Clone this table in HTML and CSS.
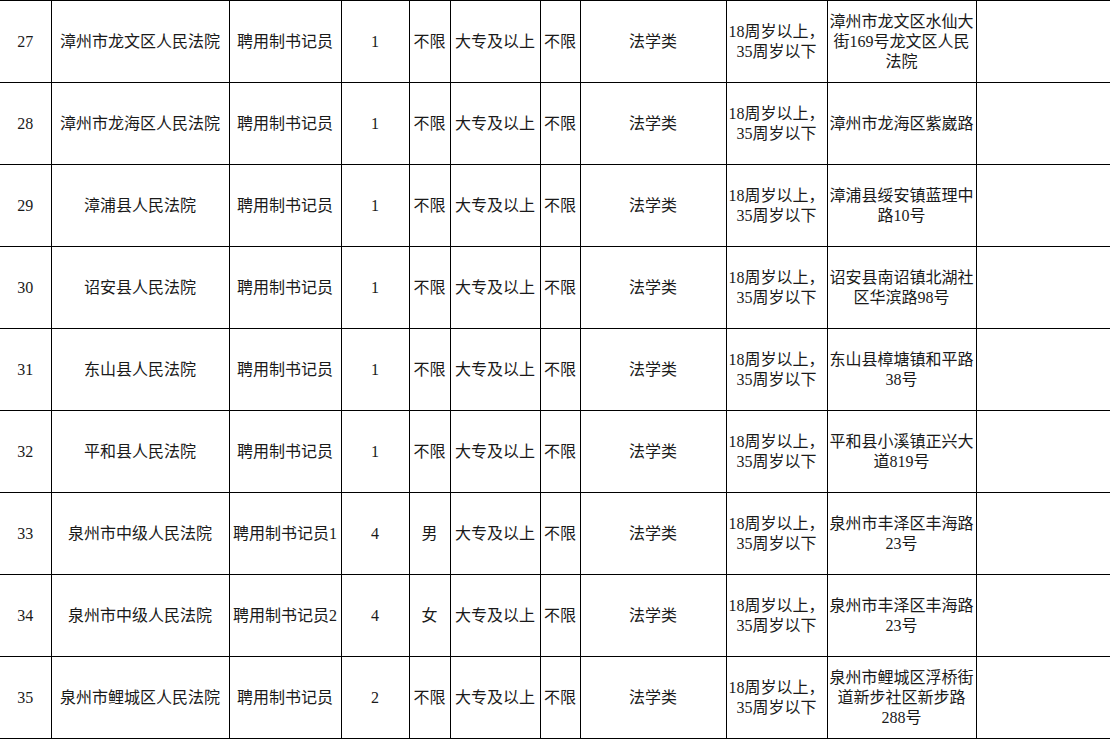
FILE: index.html
```html
<!DOCTYPE html>
<html lang="zh">
<head>
<meta charset="utf-8">
<title>招聘表</title>
<link rel="stylesheet" href="styles.css">
</head>
<body>
<table class="grid">
<colgroup>
<col class="c-no"><col class="c-unit"><col class="c-pos"><col class="c-num"><col class="c-sex"><col class="c-edu"><col class="c-deg"><col class="c-major"><col class="c-age"><col class="c-addr"><col class="c-note">
</colgroup>
<tbody>
<tr><td>27</td><td>漳州市龙文区人民法院</td><td>聘用制书记员</td><td>1</td><td>不限</td><td>大专及以上</td><td>不限</td><td>法学类</td><td>18周岁以上，<br>35周岁以下</td><td>漳州市龙文区水仙大街169号龙文区人民法院</td><td></td></tr>
<tr><td>28</td><td>漳州市龙海区人民法院</td><td>聘用制书记员</td><td>1</td><td>不限</td><td>大专及以上</td><td>不限</td><td>法学类</td><td>18周岁以上，<br>35周岁以下</td><td>漳州市龙海区紫崴路</td><td></td></tr>
<tr><td>29</td><td>漳浦县人民法院</td><td>聘用制书记员</td><td>1</td><td>不限</td><td>大专及以上</td><td>不限</td><td>法学类</td><td>18周岁以上，<br>35周岁以下</td><td>漳浦县绥安镇蓝理中路10号</td><td></td></tr>
<tr><td>30</td><td>诏安县人民法院</td><td>聘用制书记员</td><td>1</td><td>不限</td><td>大专及以上</td><td>不限</td><td>法学类</td><td>18周岁以上，<br>35周岁以下</td><td>诏安县南诏镇北湖社区华滨路98号</td><td></td></tr>
<tr><td>31</td><td>东山县人民法院</td><td>聘用制书记员</td><td>1</td><td>不限</td><td>大专及以上</td><td>不限</td><td>法学类</td><td>18周岁以上，<br>35周岁以下</td><td>东山县樟塘镇和平路38号</td><td></td></tr>
<tr><td>32</td><td>平和县人民法院</td><td>聘用制书记员</td><td>1</td><td>不限</td><td>大专及以上</td><td>不限</td><td>法学类</td><td>18周岁以上，<br>35周岁以下</td><td>平和县小溪镇正兴大道819号</td><td></td></tr>
<tr><td>33</td><td>泉州市中级人民法院</td><td>聘用制书记员1</td><td>4</td><td>男</td><td>大专及以上</td><td>不限</td><td>法学类</td><td>18周岁以上，<br>35周岁以下</td><td>泉州市丰泽区丰海路23号</td><td></td></tr>
<tr><td>34</td><td>泉州市中级人民法院</td><td>聘用制书记员2</td><td>4</td><td>女</td><td>大专及以上</td><td>不限</td><td>法学类</td><td>18周岁以上，<br>35周岁以下</td><td>泉州市丰泽区丰海路23号</td><td></td></tr>
<tr><td>35</td><td>泉州市鲤城区人民法院</td><td>聘用制书记员</td><td>2</td><td>不限</td><td>大专及以上</td><td>不限</td><td>法学类</td><td>18周岁以上，<br>35周岁以下</td><td>泉州市鲤城区浮桥街道新步社区新步路288号</td><td></td></tr>
</tbody>
</table>
</body>
</html>
```

FILE: styles.css
```css
html, body {
  margin: 0;
  padding: 0;
  background: #fff;
}
body {
  font-family: "Liberation Serif", "Noto Sans CJK SC", serif;
  font-size: 16px;
  line-height: 20px;
  color: #1a1a1a;
}
.grid {
  border-collapse: collapse;
  table-layout: fixed;
  width: 1110px;
}
.grid td {
  border: 1px solid #000;
  padding: 0 1px;
  height: 82px;
  text-align: center;
  vertical-align: middle;
  box-sizing: border-box;
  overflow: hidden;
}
.grid td:first-child {
  border-left: none;
}
.c-no { width: 51px; }
.c-unit { width: 178px; }
.c-pos { width: 112px; }
.c-num { width: 68px; }
.c-sex { width: 41px; }
.c-edu { width: 90px; }
.c-deg { width: 40px; }
.c-major { width: 146px; }
.c-age { width: 101px; }
.c-addr { width: 149px; }
.c-note { width: 134px; }
```
